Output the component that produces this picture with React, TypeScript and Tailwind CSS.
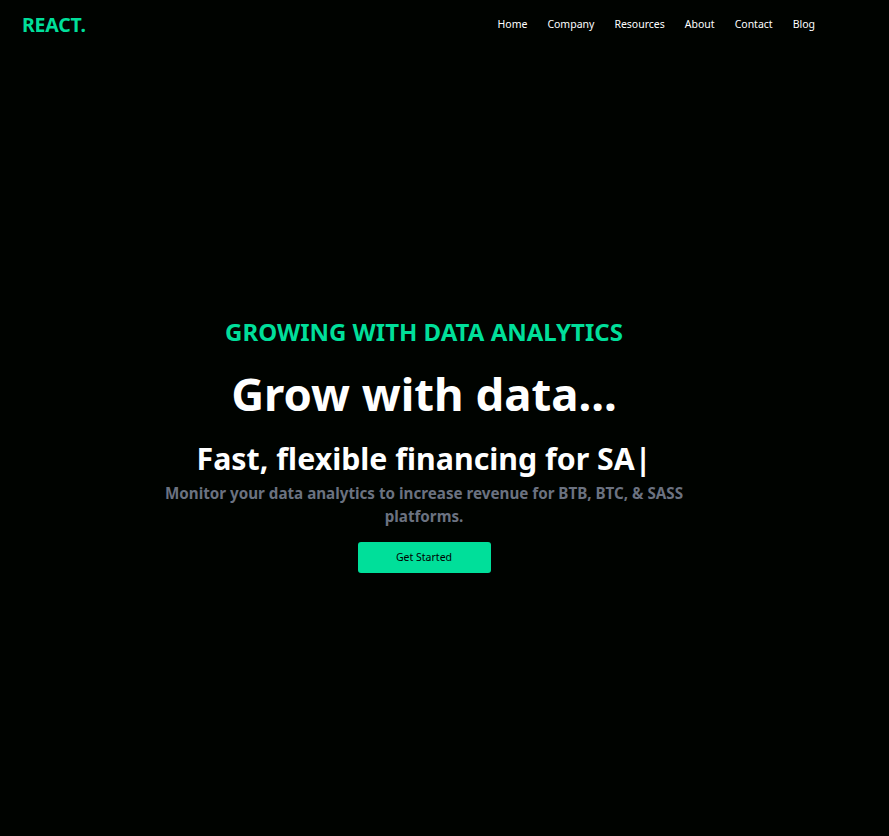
export default function App() {
  const links = ["Home", "Company", "Resources", "About", "Contact", "Blog"];
  return (
    <div
      className="min-h-[836px] w-full bg-[#000300] text-white"
      style={{ fontFamily: '"Noto Sans", "Open Sans", sans-serif' }}
    >
      <nav className="flex h-12 items-center justify-between pl-[22px] pr-[74px] pt-[2px]">
        <h1 className="text-[19.5px] font-bold tracking-[-0.2px] text-[#00df9a]">REACT.</h1>
        <ul className="flex gap-[20px] text-[10.5px] text-white">
          {links.map((l) => (
            <li key={l}>{l}</li>
          ))}
        </ul>
      </nav>

      <main className="mr-[41px] flex flex-col items-center pt-[268px] text-center">
        <p className="text-[24px] font-bold leading-[32px] text-[#00df9a]">
          GROWING WITH DATA ANALYTICS
        </p>
        <h1 className="mt-[17px] text-[45.5px] font-bold leading-[56px]">Grow with data...</h1>
        <p className="mt-[18px] text-[30.3px] font-bold leading-[40px]">
          Fast, flexible financing for SA|
        </p>
        <p className="mt-[3px] max-w-[540px] text-[15.2px] font-bold leading-[23px] text-[#6b7280]">
          Monitor your data analytics to increase revenue for BTB, BTC, &amp; SASS platforms.
        </p>
        <button className="mt-[14px] h-[31px] w-[133px] rounded-[3px] bg-[#00df9a] text-[10.5px] text-black">
          Get Started
        </button>
      </main>
    </div>
  );
}
